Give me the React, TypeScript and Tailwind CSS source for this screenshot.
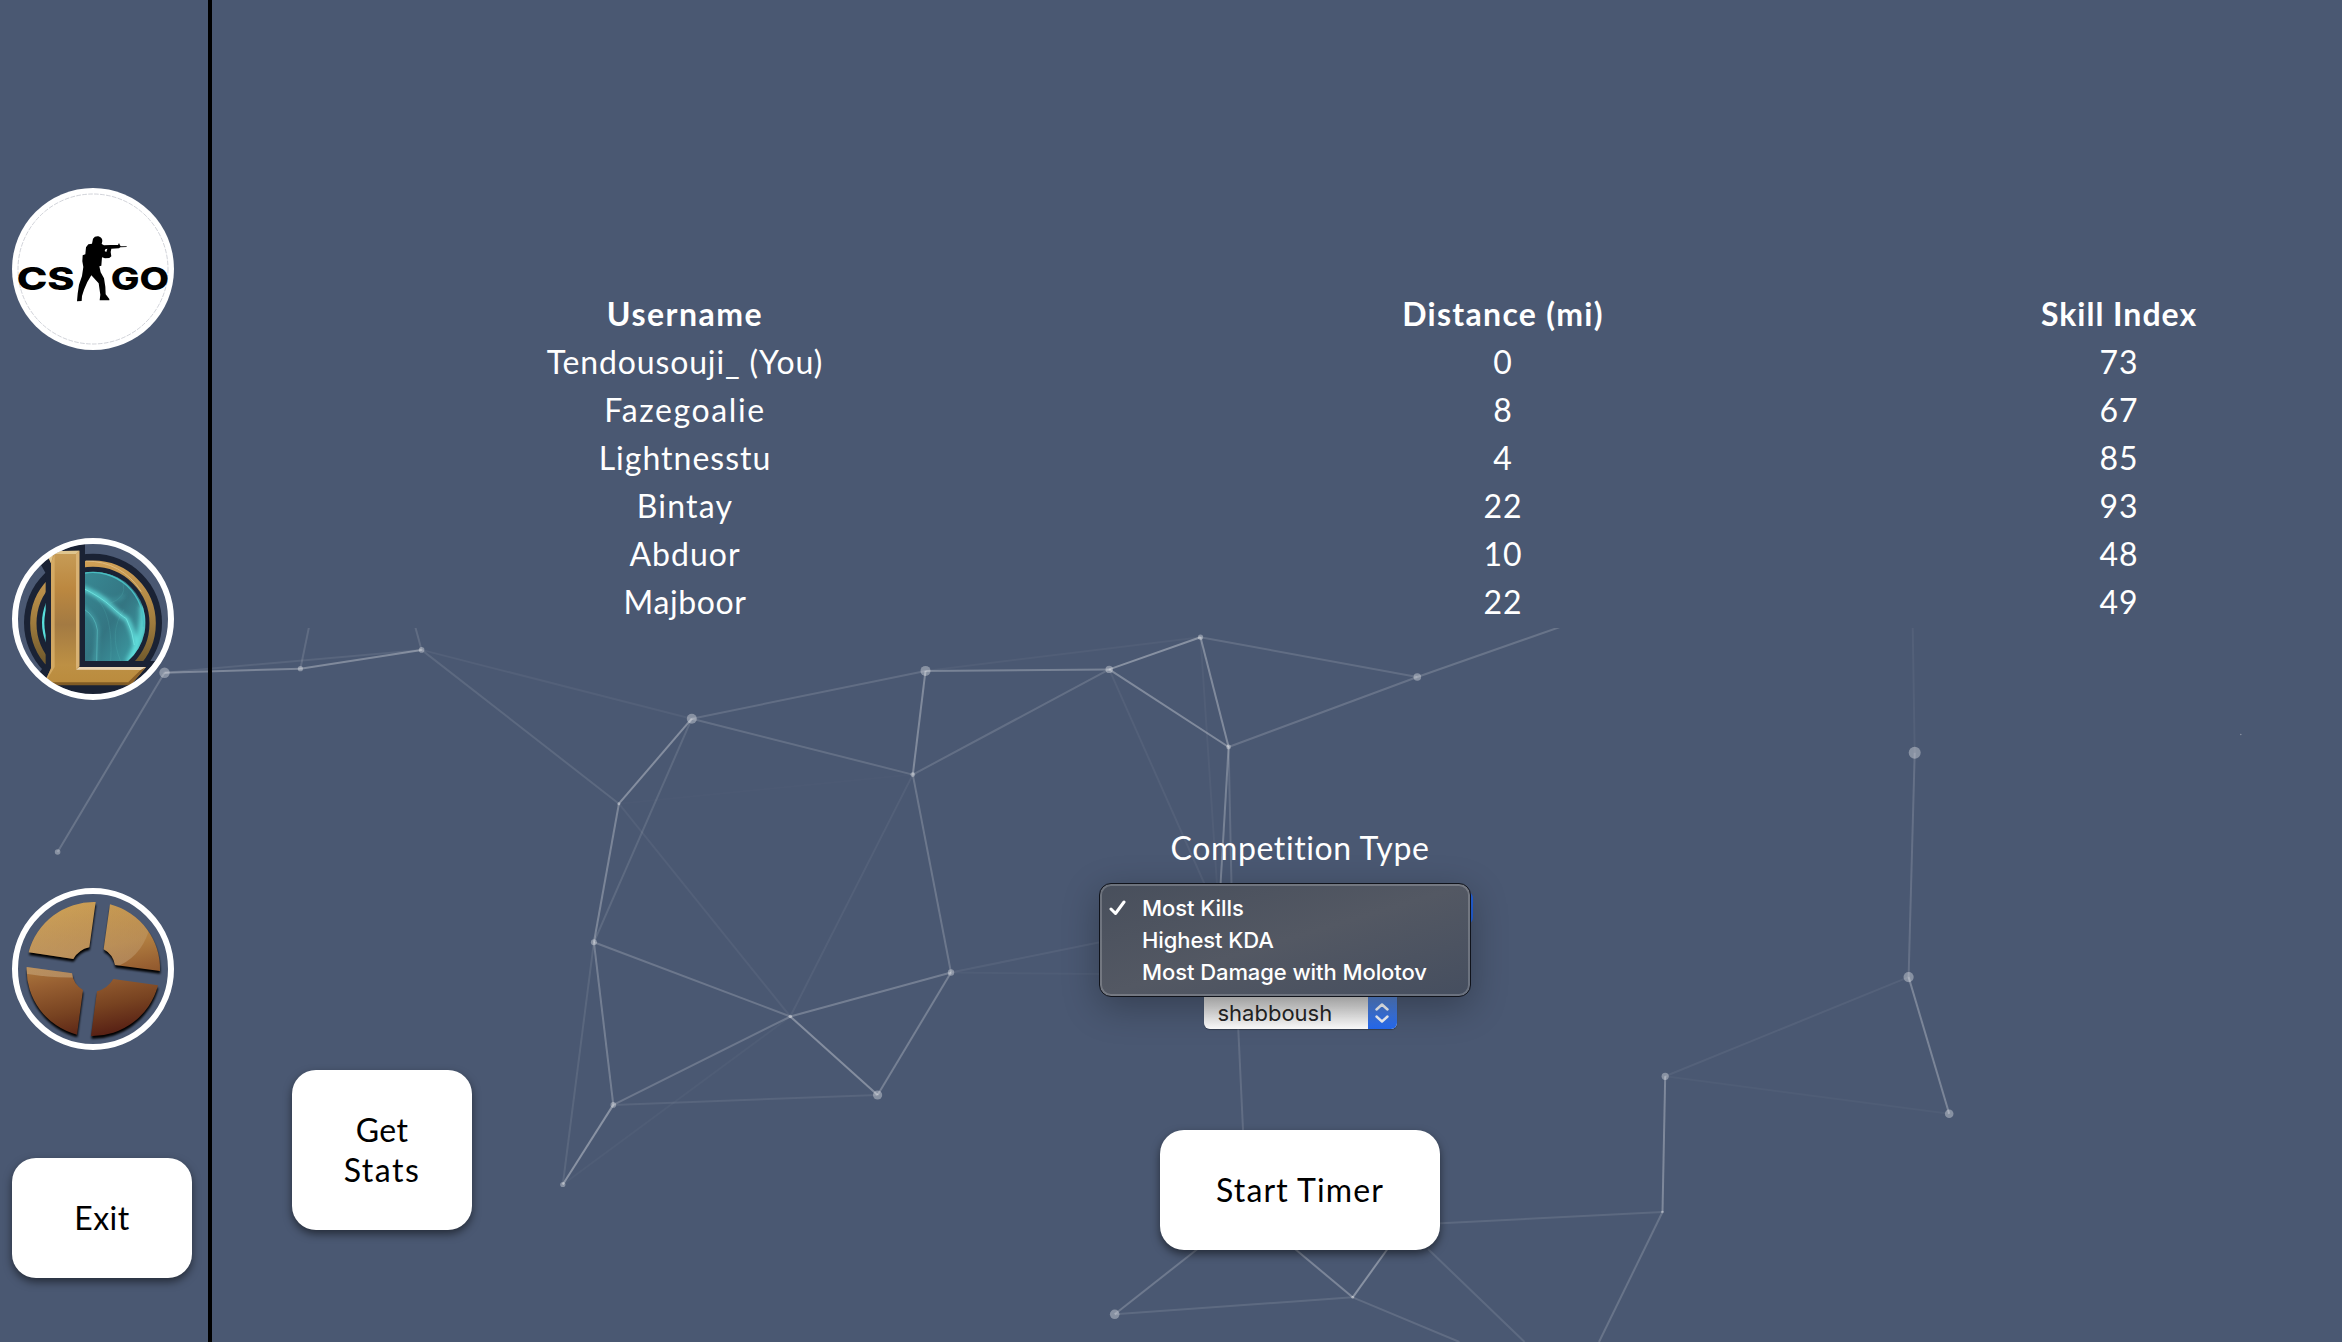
import type { ReactNode } from "react";

type Point = [number, number, number];

const nodes: Record<string, Point> = {
  A: [691.8, 718.7, 5],
  B: [925.5, 670.9, 5],
  C: [1109.2, 669.4, 3.7],
  D: [1200.5, 637.2, 2.6],
  E: [1228.6, 747, 2.4],
  F: [912.8, 774.6, 2.4],
  G: [618.9, 803.7, 1.5],
  H: [593.9, 942.2, 3],
  I: [951, 972.5, 3.2],
  J: [790.3, 1016.5, 1.8],
  K: [877.6, 1095, 4.6],
  L: [613.3, 1104.9, 2.8],
  M: [562.8, 1184.5, 2.6],
  N: [1665.2, 1076.3, 3.6],
  O: [1662.5, 1212, 1.3],
  P: [1352.7, 1297.3, 1.4],
  Q: [1114.7, 1314.3, 4.8],
  R: [1914.7, 752.7, 6],
  S: [1908.6, 977.1, 5.1],
  T: [1949.2, 1113.7, 4.3],
  U: [164.5, 672.7, 5.2],
  V: [300.4, 668.7, 2.6],
  W: [421.6, 649.9, 2.8],
  X: [57.6, 852, 2.8],
  Y: [1417.3, 677, 3.8],
  Z: [2240.8, 734.5, 0.8],
};

const links: [string, string, number][] = [
  ["U", "V", 0.28], ["U", "W", 0.08], ["V", "W", 0.3], ["W", "A", 0.05],
  ["W", "G", 0.1], ["U", "X", 0.17], ["A", "B", 0.13], ["A", "F", 0.14],
  ["A", "G", 0.32], ["A", "H", 0.11], ["B", "C", 0.26], ["B", "F", 0.3],
  ["B", "D", 0.04], ["C", "D", 0.34], ["C", "E", 0.3], ["D", "E", 0.3],
  ["F", "C", 0.14], ["F", "I", 0.19], ["F", "J", 0.05], ["F", "G", 0.01],
  ["G", "H", 0.27], ["G", "J", 0.05], ["H", "J", 0.19], ["H", "L", 0.23],
  ["H", "M", 0.09], ["J", "I", 0.23], ["J", "K", 0.32], ["J", "L", 0.19],
  ["J", "M", 0.03], ["K", "I", 0.24], ["K", "L", 0.08], ["L", "M", 0.35],
  ["D", "Y", 0.13], ["E", "Y", 0.16], ["R", "S", 0.15], ["S", "T", 0.27],
  ["S", "N", 0.06], ["N", "T", 0.03], ["N", "O", 0.29], ["P", "Q", 0.11],
];

const rays: [number, number, number, number, number][] = [
  [300.4, 668.7, 309.2, 626, 0.12],
  [421.6, 649.9, 415, 626, 0.12],
  [1109.2, 669.4, 1205, 885, 0.05],
  [1200.5, 637.2, 1217, 885, 0.04],
  [1228.6, 747, 1220.5, 885, 0.26],
  [1228.6, 747, 1231.5, 885, 0.13],
  [1231.5, 885, 1243.2, 1134, 0.13],
  [951, 972.5, 1101, 942, 0.06],
  [951, 972.5, 1101, 974, 0.03],
  [1417.3, 677, 1560, 627, 0.17],
  [1914.7, 752.7, 1912.7, 626, 0.05],
  [1662.5, 1212, 1436, 1223.5, 0.1],
  [1662.5, 1212, 1599, 1342, 0.17],
  [1352.7, 1297.3, 1459.5, 1342, 0.12],
  [1428, 1249, 1524.6, 1342, 0.11],
  [1114.7, 1314.3, 1197.5, 1249, 0.2],
  [1352.7, 1297.3, 1295, 1249, 0.27],
  [1352.7, 1297.3, 1387.5, 1249, 0.34],
];

function Particles() {
  return (
    <svg className="absolute bottom-0 left-0 h-[714px] w-[2342px]" viewBox="0 628 2342 714">
      <g stroke="#fff" strokeWidth="2">
        {links.map(([a, b, o]) => (
          <line key={a + b} x1={nodes[a][0]} y1={nodes[a][1]} x2={nodes[b][0]} y2={nodes[b][1]} strokeOpacity={o} />
        ))}
        {rays.map(([x1, y1, x2, y2, o], i) => (
          <line key={i} x1={x1} y1={y1} x2={x2} y2={y2} strokeOpacity={o} />
        ))}
      </g>
      {Object.entries(nodes).map(([k, [x, y, r]]) => (
        <circle key={k} cx={x} cy={y} r={r} fill="#fff" fillOpacity="0.34" />
      ))}
    </svg>
  );
}

function CsgoLogo() {
  return (
    <svg className="size-[162px]" viewBox="36 54 486 486">
      <circle cx="279" cy="297" r="243" fill="#fff" />
      <circle cx="279" cy="297" r="225" fill="none" stroke="#b9bcc6" strokeWidth="2" strokeDasharray="14 4" />
      <g fontFamily="Inter, sans-serif" fontWeight="800" fontSize="94" fill="#000">
        <text x="50" y="360" textLength="174" lengthAdjust="spacingAndGlyphs">CS</text>
        <text x="332" y="360" textLength="175" lengthAdjust="spacingAndGlyphs">GO</text>
      </g>
      <path d="M279 206Q284 198 295 199Q307 202 307 213L305 222L312 226L332 225L354 225L357 219L360 226L362 229L380 229V231L361 232L357 235L334 236L332 246L334 259L328 264L315 265L306 262L304 287L298 289L302 307L312 325L316 350L317 373L328 387V391L299 391L301 374L296 340L274 316L262 336L252 359L246 378L245 393L231 394L233 371L237 344L246 318L250 291L247 274L248 256L256 253L258 232L265 223L276 221Z" />
      <path d="M316 238L322 236L319 246L314 243Z" fill="#fff" />
    </svg>
  );
}

function LeagueLogo() {
  return (
    <svg className="size-[162px]" viewBox="36 54 486 486">
      <defs>
        <clipPath id="lol-clip"><circle cx="279" cy="297" r="226" /></clipPath>
        <clipPath id="orb-clip"><path d="M255 159A152 152 0 0 1 384 423H255Z" /></clipPath>
        <linearGradient id="lol-ring" x1="0" y1="0" x2="0" y2="1">
          <stop offset="0" stopColor="#cf9f55" />
          <stop offset="0.5" stopColor="#9f7b3d" />
          <stop offset="1" stopColor="#574824" />
        </linearGradient>
        <linearGradient id="lol-stem" x1="0" y1="0" x2="0" y2="1">
          <stop offset="0" stopColor="#c79d58" />
          <stop offset="0.28" stopColor="#bc8840" />
          <stop offset="0.55" stopColor="#a37a42" />
          <stop offset="0.85" stopColor="#bd9044" />
          <stop offset="1" stopColor="#ba8b3d" />
        </linearGradient>
        <linearGradient id="lol-orb" x1="0" y1="0" x2="1" y2="1">
          <stop offset="0" stopColor="#388994" />
          <stop offset="0.5" stopColor="#347582" />
          <stop offset="1" stopColor="#3fa8ae" />
        </linearGradient>
        <filter id="soft" x="-30%" y="-30%" width="160%" height="160%"><feGaussianBlur stdDeviation="7" /></filter>
      </defs>
      <g clipPath="url(#lol-clip)">
        <circle cx="279" cy="308" r="207" fill="#1a2234" />
        <circle cx="279" cy="310" r="179" fill="none" stroke="url(#lol-ring)" strokeWidth="19" />
        <path d="M257 123Q365 124 424 215" fill="none" stroke="#e2c591" strokeWidth="3" opacity=".7" />
        <circle cx="279" cy="308" r="153" fill="#58dfdc" />
        <circle cx="282" cy="308" r="149" fill="#1a2234" />
        <g clipPath="url(#orb-clip)">
          <rect x="250" y="150" width="190" height="280" fill="url(#lol-orb)" />
          <g fill="none" stroke="#62e2df" filter="url(#soft)">
            <path d="M245 203Q295 222 332 258T380 296Q402 336 407 380L394 430" strokeWidth="12" />
            <path d="M429 255Q438 340 385 430" strokeWidth="22" opacity=".8" />
            <path d="M245 260Q300 300 292 350L285 430" strokeWidth="6" opacity=".5" />
            <path d="M285 215Q345 260 372 225" strokeWidth="5" opacity=".4" />
          </g>
          <g fill="none" stroke="#78ece8">
            <path d="M250 205Q304 232 333 259T379 296Q399 336 403 375" strokeWidth="2.5" opacity=".85" />
            <path d="M253 268Q286 289 292 330L290 424" strokeWidth="2" opacity=".55" />
            <path d="M290 236Q340 284 332 424M372 268Q325 335 362 424M330 250Q382 232 369 190" strokeWidth="1.5" opacity=".22" />
          </g>
          <path d="M255 159A152 152 0 0 1 430 320" fill="none" stroke="#49bfc3" strokeWidth="4" />
        </g>
        <path d="M120 70H255V423H470L425 530H120V455L137 432V160L120 130Z" fill="#1a2234" />
        <path d="M137 94L238 92V441H438L392 495H130L153 445V130Z" fill="url(#lol-stem)" />
        <path d="M137 94L238 92L228 102H160L153 130Z" fill="#dfc58e" />
        <path d="M238 92V438L228 448V102Z" fill="#d9b273" />
        <path d="M153 130L164 102V441L140 480L130 495L153 445Z" fill="#dbb16c" opacity=".75" />
        <path d="M228 449L238 441H438L430 450Z" fill="#e8d4b4" />
        <path d="M438 441L392 495L385 486L422 450Z" fill="#8b6027" />
        <path d="M130 487H390L394 496H130Z" fill="#805b25" />
      </g>
      <circle cx="279" cy="297" r="234" fill="none" stroke="#fff" strokeWidth="18" />
    </svg>
  );
}

function TeamFortressLogo() {
  const pieces = (
    <>
      <path d="M287 96A202 202 0 0 0 86 247L220 267Q236 239 268 232Z" />
      <path d="M330 103A200 200 0 0 1 480 303L345 285Q339 253 311 238Z" />
      <path d="M80 291L216 310Q219 342 249 360L231 494A202 202 0 0 1 80 291Z" />
      <path d="M340 327L474 346A203 203 0 0 1 273 498L291 364Q322 356 340 327Z" />
    </>
  );
  return (
    <svg className="size-[162px]" viewBox="36 54 486 486">
      <defs>
        <linearGradient id="tf-fill" gradientUnits="userSpaceOnUse" x1="235" y1="95" x2="315" y2="498">
          <stop offset="0" stopColor="#cb9d50" />
          <stop offset="0.36" stopColor="#b17e40" />
          <stop offset="0.55" stopColor="#986032" />
          <stop offset="0.78" stopColor="#784321" />
          <stop offset="1" stopColor="#561f14" />
        </linearGradient>
        <filter id="tf-blur"><feGaussianBlur stdDeviation="2.5" /></filter>
        <linearGradient id="tf-shine" x1="0" y1="0" x2="0" y2="1">
          <stop offset="0" stopColor="#d4bd98" stopOpacity="0" />
          <stop offset="1" stopColor="#d4bd98" stopOpacity="0.42" />
        </linearGradient>
        <clipPath id="tf-pieces">{pieces}</clipPath>
      </defs>
      <g fill="#000" filter="url(#tf-blur)" transform="translate(1 8)">{pieces}</g>
      <g fill="url(#tf-fill)">{pieces}</g>
      <path d="M60 60H420L446 184Q420 264 345 292L240 322Q150 325 70 310Z" fill="url(#tf-shine)" clipPath="url(#tf-pieces)" />
      <circle cx="279" cy="297" r="234" fill="none" stroke="#fff" strokeWidth="18" />
    </svg>
  );
}

function ActionButton({ className, children }: { className: string; children: ReactNode }) {
  return (
    <button
      className={
        "flex shrink-0 flex-col items-center justify-center rounded-3xl bg-white text-[32px] leading-10 text-black shadow-[0_4px_8px_rgba(0,0,0,0.5)] " +
        className
      }
    >
      {children}
    </button>
  );
}

const rows: [string, string, string, string][] = [
  ["Tendousouji_ (You)", "tracking-[0.85px]", "0", "73"],
  ["Fazegoalie", "tracking-[1.6px]", "8", "67"],
  ["Lightnesstu", "tracking-[1px]", "4", "85"],
  ["Bintay", "tracking-[1.2px]", "22", "93"],
  ["Abduor", "tracking-[1px]", "10", "48"],
  ["Majboor", "tracking-[0.6px]", "22", "49"],
];

const options = ["Most Kills", "Highest KDA", "Most Damage with Molotov"];

export default function App() {
  return (
    <div className="relative isolate flex h-[1342px] w-[2342px] overflow-hidden bg-[#4a5872] font-['Lato',sans-serif] text-[32px] text-white">
      <div className="absolute inset-0 -z-10">
        <Particles />
      </div>

      <aside className="flex w-[212px] shrink-0 flex-col items-start border-r-4 border-black pt-[188px] pl-3">
        <div className="flex flex-col gap-[188px]">
          <CsgoLogo />
          <LeagueLogo />
          <TeamFortressLogo />
        </div>
        <ActionButton className="mt-[108px] h-[120px] w-[180px]">
          <span className="tracking-[0.5px]">Exit</span>
        </ActionButton>
      </aside>

      <main className="flex flex-col pt-[290px]">
        <div className="ml-16 grid grid-cols-[818px_818px_414px] text-center leading-[48px]">
          <div className="font-bold tracking-[1.5px]">Username</div>
          <div className="font-bold tracking-[1.3px]">Distance (mi)</div>
          <div className="font-bold tracking-[1px]">Skill Index</div>
          {rows.map(([name, spacing, distance, skill]) => (
            <div key={name} className="contents">
              <div className={spacing}>{name}</div>
              <div className="tracking-[0.9px]">{distance}</div>
              <div className="tracking-[0.9px]">{skill}</div>
            </div>
          ))}
        </div>

        <div className="flex items-start pl-20">
          <ActionButton className="mt-[444px] h-40 w-[180px]">
            <span className="tracking-[0.4px]">Get</span>
            <span className="tracking-[1.5px]">Stats</span>
          </ActionButton>

          <section className="ml-[642px] flex w-[372px] flex-col items-center pt-[198px]">
            <h2 className="leading-[48px] tracking-[0.6px]">Competition Type</h2>
            <div className="relative mt-4 h-10 w-[346px]">
              <div className="mt-1 ml-auto h-8 w-10 rounded-md bg-[#2460d8]" />
              <ul className="absolute top-[-5px] left-[-28px] z-10 h-[114px] w-[372px] rounded-xl border border-[#10131b] bg-linear-to-br from-[#484f5c] via-[#535863] to-[#454e5f] pt-2 font-['Inter',sans-serif] text-[22px] leading-8 font-medium shadow-[inset_0_0_0_2px_rgba(255,255,255,0.2),0_10px_36px_rgba(0,0,0,0.28)]">
                {options.map((label, i) => (
                  <li key={label} className="flex items-center pl-[9px]">
                    <span className="w-[33px]">
                      {i === 0 && (
                        <svg className="h-4 w-[17px]" viewBox="0 0 17 16" fill="none" stroke="#fff" strokeWidth="3" strokeLinecap="round" strokeLinejoin="round">
                          <path d="M2 9L6.5 13.5L15 2" />
                        </svg>
                      )}
                    </span>
                    <span className="tracking-[-0.08px]">{label}</span>
                  </li>
                ))}
              </ul>
            </div>
            <div className="mt-[69px] flex h-8 w-[193px] rounded-b-md bg-linear-to-b from-[#c9c9c9] to-white font-['Inter',sans-serif] text-[22px] leading-8 text-[#252525] shadow-[0_1px_1px_rgba(0,0,0,0.3)]">
              <span className="flex-1 pl-3.5">shabboush</span>
              <span className="flex w-[29px] items-center justify-center rounded-br-md bg-linear-to-b from-[#5480cb] to-[#2469f0]">
                <svg className="h-5 w-3.5" viewBox="0 0 14 20" fill="none" stroke="#f2f4f8" strokeWidth="2.4" strokeLinecap="round" strokeLinejoin="round">
                  <path d="M1.5 6.5L7 1.5L12.5 6.5M1.5 13.5L7 18.5L12.5 13.5" />
                </svg>
              </span>
            </div>
            <ActionButton className="mt-[101px] h-[120px] w-[280px]">
              <span className="tracking-[1.1px]">Start Timer</span>
            </ActionButton>
          </section>
        </div>
      </main>
    </div>
  );
}
